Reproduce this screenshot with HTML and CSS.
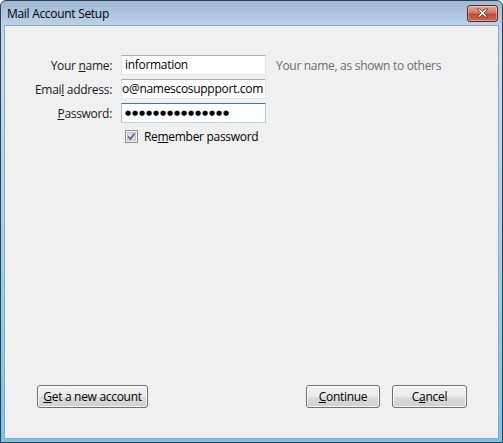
FILE: index.html
```html
<!DOCTYPE html>
<html lang="en">
<head>
  <meta charset="UTF-8">
  <title>Mail Account Setup</title>
  <link rel="stylesheet" href="styles.css">
</head>
<body>
  <div class="window">
    <div class="titlebar">
      <span class="title">Mail Account Setup</span>
      <button class="close" aria-label="Close">
        <svg width="13" height="10" viewBox="0 0 13 10">
          <path d="M1 1 L4 1 L6.5 3.5 L9 1 L12 1 L8 5 L12 9 L9 9 L6.5 6.5 L4 9 L1 9 L5 5 Z" fill="#fff" stroke="#5a2a25" stroke-width="0.8" stroke-linejoin="round"/>
        </svg>
      </button>
    </div>

    <div class="client">
      <div class="form">
        <label class="label">Your <u>n</u>ame:</label>
        <div class="field">information</div>
        <div class="hint">Your name, as shown to others</div>

        <label class="label">Emai<u>l</u> address:</label>
        <div class="field field-scrolled"><span>o@namescosuppport.com</span></div>
        <div></div>

        <label class="label"><u>P</u>assword:</label>
        <div class="field field-focus dots">●●●●●●●●●●●●●●●</div>
        <div></div>

        <div></div>
        <div class="check-row">
          <svg class="check" width="13" height="13" viewBox="0 0 13 13">
            <rect x="0.5" y="0.5" width="12" height="12" fill="#f4f4f4" stroke="#8f8f8f"/>
            <rect x="2.5" y="2.5" width="8" height="8" fill="#dcdcdc" stroke="#c4c4c4"/>
            <path d="M3.2 6.4 L5.4 9 L9.6 3.4" fill="none" stroke="#4a5f97" stroke-width="1.6"/>
          </svg>
          <span>Re<u>m</u>ember password</span>
        </div>
        <div></div>
      </div>

      <div class="footer">
        <button class="btn btn-wide"><u>G</u>et a new account</button>
        <div class="footer-right">
          <button class="btn btn-continue"><u>C</u>ontinue</button>
          <button class="btn btn-cancel">C<u>a</u>ncel</button>
        </div>
      </div>
    </div>
  </div>
</body>
</html>
```

FILE: styles.css
```css
html, body {
  margin: 0;
  padding: 0;
}
body {
  width: 503px;
  height: 443px;
  font-family: "Open Sans", "Noto Sans", sans-serif;
  font-size: 12px;
  letter-spacing: -0.3px;
  color: #000;
  overflow: hidden;
}
.window {
  box-sizing: border-box;
  width: 503px;
  height: 443px;
  border: 1px solid #2f3f52;
  border-radius: 6px 6px 0 0;
  background: linear-gradient(#9fb8d3, #bcd3ea 25px, #c6dcf0 60px, #78c4e6 100%);
  display: flex;
  flex-direction: column;
  padding: 0 3px 3px 3px;
}
.titlebar {
  height: 24px;
  display: flex;
  align-items: center;
  justify-content: space-between;
  padding-left: 3px;
}
.title {
  color: #000;
  font-size: 12px;
}
.close {
  width: 31px;
  height: 17px;
  margin-top: 0;
  margin-right: 1px;
  padding: 0;
  border: 1px solid #5c2623;
  border-radius: 3px;
  background: linear-gradient(#e7a597, #d47868 45%, #c04a34 55%, #cf6b52);
  box-shadow: inset 0 0 0 1px rgba(255,255,255,0.35);
  display: flex;
  align-items: center;
  justify-content: center;
}
.client {
  flex: 1;
  background: #f0f0f0;
  border: 1px solid #8aa8c6;
  display: flex;
  flex-direction: column;
}
.form {
  display: grid;
  grid-template-columns: 107px 145px auto;
  column-gap: 9px;
  row-gap: 4px;
  margin-top: 29px;
  align-items: center;
}
.label {
  text-align: right;
  color: #1a1a1a;
}
.field {
  box-sizing: border-box;
  height: 20px;
  background: #fff;
  border: 1px solid #e2e3ea;
  border-top-color: #abadb3;
  border-bottom-color: #e3e9ef;
  padding: 0 3px;
  line-height: 18px;
  white-space: nowrap;
  overflow: hidden;
}
.field-scrolled {
  display: flex;
  justify-content: flex-end;
  padding: 0 2px 0 0;
}
.field-focus {
  border-color: #a4c9e3;
  border-top-color: #3d7bad;
  border-bottom-color: #b7d9ed;
}
.dots {
  font-family: "DejaVu Sans", sans-serif;
  font-size: 7px;
  letter-spacing: 0.9px;
  line-height: 18px;
}
.hint {
  color: #6d6d6d;
  padding-left: 1px;
}
.check-row {
  display: flex;
  align-items: center;
  gap: 6px;
  height: 18px;
  padding-left: 4px;
  white-space: nowrap;
}
.footer {
  margin-top: auto;
  display: flex;
  justify-content: space-between;
  padding: 0 31px 30px 32px;
}
.footer-right {
  display: flex;
  gap: 12px;
}
.btn {
  box-sizing: border-box;
  height: 23px;
  padding: 0;
  font-family: inherit;
  font-size: 12px;
  letter-spacing: -0.3px;
  color: #000;
  border: 1px solid #707070;
  border-radius: 3px;
  background: linear-gradient(#f2f2f2, #ebebeb 50%, #dddddd 50%, #cfcfcf);
  box-shadow: inset 0 0 0 1px rgba(255,255,255,0.8);
}
.btn-wide {
  width: 111px;
}
.btn-continue {
  width: 74px;
}
.btn-cancel {
  width: 75px;
}
```
